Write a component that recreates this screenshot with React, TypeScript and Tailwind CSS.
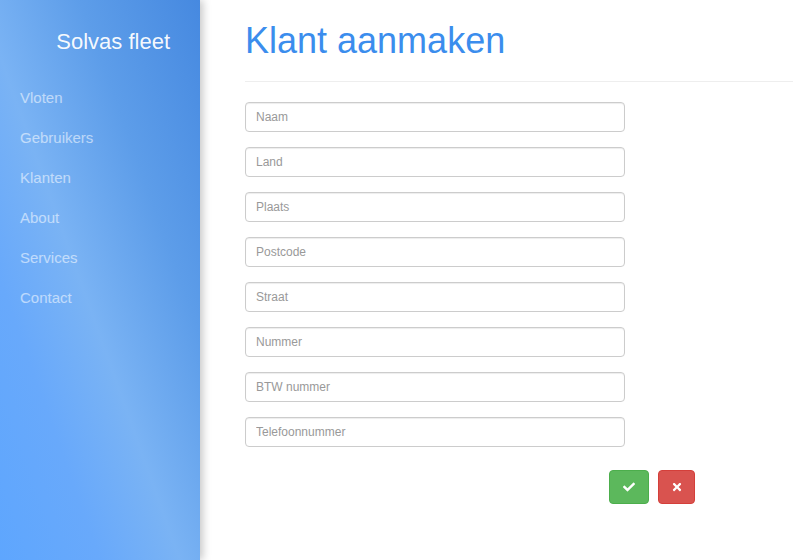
import React from "react";
import { FaCheck, FaTimes } from "react-icons/fa";

const fields = [
  "Naam",
  "Land",
  "Plaats",
  "Postcode",
  "Straat",
  "Nummer",
  "BTW nummer",
  "Telefoonnummer",
];

const nav = ["Vloten", "Gebruikers", "Klanten", "About", "Services", "Contact"];

export default function App() {
  return (
    <div
      className="flex h-[560px] w-[793px] overflow-hidden bg-white"
      style={{ fontFamily: '"Liberation Sans", Arial, sans-serif' }}
    >
      <aside className="relative z-10 flex h-full w-[200px] shrink-0 flex-col bg-[linear-gradient(to_bottom_left,#4689e0_0%,#5d9de9_30%,#7ab3f4_55%,#68a9fb_75%,#5ea6fe_100%)] shadow-[3px_0_8px_rgba(0,0,0,0.22)]">
        <div className="mt-[28px] pr-[30px] text-right text-[22px] leading-[28px] text-white/95">
          Solvas fleet
        </div>
        <nav className="mt-[22px] flex flex-col">
          {nav.map((n) => (
            <a
              key={n}
              className="block h-10 pl-5 text-[15px] leading-10 text-white/55"
            >
              {n}
            </a>
          ))}
        </nav>
      </aside>
      <main className="flex-1 pl-[45px]">
        <div className="mt-[21px] border-b border-[#eeeeee] pb-5">
          <h1 className="text-[36px] leading-[40px] font-normal text-[#3b8ded]">
            Klant aanmaken
          </h1>
        </div>
        <form className="mt-5 flex flex-col gap-[15px]">
          {fields.map((f) => (
            <input
              key={f}
              placeholder={f}
              className="h-[30px] w-[380px] rounded-[4px] border border-[#cccccc] bg-white px-[10px] text-[12px] text-[#555] shadow-[inset_0_1px_1px_rgba(0,0,0,0.075)] outline-none placeholder:text-[#999999]"
            />
          ))}
        </form>
        <div className="mt-[23px] ml-[364px] flex gap-[9px]">
          <button className="flex h-[34px] w-10 items-center justify-center rounded-[4px] border border-[#4cae4c] bg-[#5cb85c] text-white">
            <FaCheck className="h-3 w-3" />
          </button>
          <button className="flex h-[34px] w-[37px] items-center justify-center rounded-[4px] border border-[#d43f3a] bg-[#d9534f] text-white">
            <FaTimes className="h-3 w-3" />
          </button>
        </div>
      </main>
    </div>
  );
}
